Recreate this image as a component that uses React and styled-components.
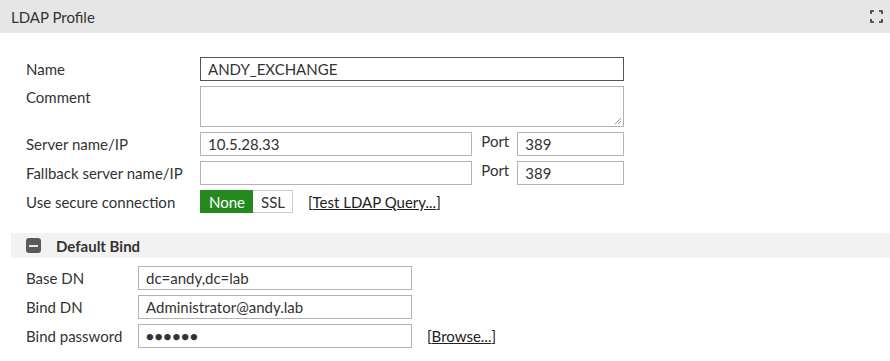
import React from "react";
import styled, { createGlobalStyle } from "styled-components";

const GlobalStyle = createGlobalStyle`
  body {
    margin: 0;
    background: #ffffff;
    font-family: Lato, "Open Sans", sans-serif;
    font-size: 15px;
    color: #333333;
  }
`;

const Page = styled.div`
  width: 890px;
  height: 361px;
  overflow: hidden;
  background: #ffffff;
`;

const TitleBar = styled.div`
  height: 33px;
  background: #e6e6e6;
  display: flex;
  align-items: center;
  justify-content: space-between;
  padding: 0 6px 0 11px;
  box-sizing: border-box;
  font-size: 15px;
  color: #333;
`;

const ExpandIcon = styled.svg`
  width: 13px;
  height: 13px;
  margin-right: 1px;
`;

const Form = styled.div`
  display: grid;
  grid-template-columns: 174px 424px;
  row-gap: 5px;
  padding: 24px 0 0 26px;
  align-items: center;
`;

const Label = styled.div`
  font-size: 15px;
  color: #333;
  align-self: ${(p) => (p.$top ? "start" : "center")};
  padding-top: ${(p) => (p.$top ? "2px" : "0")};
`;

const Field = styled.div`
  height: 24px;
  box-sizing: border-box;
  border: 1px solid ${(p) => (p.$focus ? "#555" : "#b3b3b3")};
  padding: 0 7px;
  display: flex;
  align-items: center;
  font-size: 15px;
  color: #333;
  width: ${(p) => p.$w || "100%"};
  background: #fff;
`;

const TextArea = styled(Field)`
  height: 41px;
  position: relative;
`;

const Grip = styled.svg`
  position: absolute;
  right: 1px;
  bottom: 1px;
  width: 8px;
  height: 8px;
`;

const InlineRow = styled.div`
  display: flex;
  align-items: center;
`;

const PortLabel = styled.span`
  margin: 0 8px 0 9px;
  font-size: 15px;
  align-self: flex-start;
  line-height: 18px;
`;

const Toggle = styled.div`
  display: flex;
  height: 23px;
`;

const ToggleBtn = styled.div`
  height: 23px;
  box-sizing: border-box;
  display: flex;
  align-items: center;
  padding: 0 7px 0 8px;
  font-size: 15px;
  background: ${(p) => (p.$active ? "#248a1d" : "#fff")};
  color: ${(p) => (p.$active ? "#fff" : "#333")};
  border: 1px solid ${(p) => (p.$active ? "#248a1d" : "#ccc")};
  border-left: ${(p) => (p.$active ? "1px solid #248a1d" : "none")};
`;

const LinkText = styled.span`
  margin-left: 15px;
  font-size: 15px;
  color: #222;
  a {
    color: #222;
    text-decoration: underline;
  }
`;

const SectionHead = styled.div`
  margin: 20px 0 0 11px;
  height: 25px;
  background: #f2f2f2;
  display: flex;
  align-items: center;
  padding-left: 15px;
  font-weight: 700;
  font-size: 15px;
  color: #333;
`;

const Minus = styled.span`
  width: 15px;
  height: 15px;
  border-radius: 3px;
  background: #5a5a5a;
  display: flex;
  align-items: center;
  justify-content: center;
  margin-right: 15px;
  &::after {
    content: "";
    width: 9px;
    height: 2px;
    background: #e6e6e6;
  }
`;

const BindForm = styled.div`
  display: grid;
  grid-template-columns: 112px 274px auto;
  row-gap: 5px;
  padding: 8px 0 0 26px;
  align-items: center;
`;

const Dots = styled.span`
  letter-spacing: 1px;
  font-size: 13px;
`;

export default function App() {
  return (
    <Page>
      <GlobalStyle />
      <TitleBar>
        <span>LDAP Profile</span>
        <ExpandIcon viewBox="0 0 13 13">
          <path
            d="M1 4V1h3M9 1h3v3M12 9v3H9M4 12H1V9"
            fill="none"
            stroke="#333"
            strokeWidth="1.6"
          />
        </ExpandIcon>
      </TitleBar>
      <Form>
        <Label>Name</Label>
        <Field $focus>ANDY_EXCHANGE</Field>
        <Label $top>Comment</Label>
        <TextArea>
          <Grip viewBox="0 0 8 8">
            <path d="M7 1L1 7M7 4L4 7" stroke="#999" strokeWidth="1" />
          </Grip>
        </TextArea>
        <Label>Server name/IP</Label>
        <InlineRow>
          <Field $w="273px">10.5.28.33</Field>
          <PortLabel>Port</PortLabel>
          <Field $w="107px">389</Field>
        </InlineRow>
        <Label>Fallback server name/IP</Label>
        <InlineRow>
          <Field $w="273px" />
          <PortLabel>Port</PortLabel>
          <Field $w="107px">389</Field>
        </InlineRow>
        <Label>Use secure connection</Label>
        <InlineRow>
          <Toggle>
            <ToggleBtn $active>None</ToggleBtn>
            <ToggleBtn>SSL</ToggleBtn>
          </Toggle>
          <LinkText>
            [<a>Test LDAP Query...</a>]
          </LinkText>
        </InlineRow>
      </Form>
      <SectionHead>
        <Minus />
        Default Bind
      </SectionHead>
      <BindForm>
        <Label>Base DN</Label>
        <Field>dc=andy,dc=lab</Field>
        <span />
        <Label>Bind DN</Label>
        <Field>Administrator@andy.lab</Field>
        <span />
        <Label>Bind password</Label>
        <Field>
          <Dots>●●●●●●</Dots>
        </Field>
        <LinkText>
          [<a>Browse...</a>]
        </LinkText>
      </BindForm>
    </Page>
  );
}
